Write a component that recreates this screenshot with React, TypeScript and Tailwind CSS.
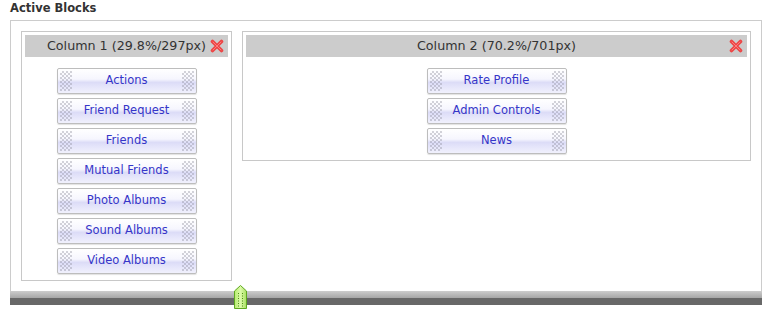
const col1 = ['Actions', 'Friend Request', 'Friends', 'Mutual Friends', 'Photo Albums', 'Sound Albums', 'Video Albums'];
const col2 = ['Rate Profile', 'Admin Controls', 'News'];

const RemoveIcon = () => (
  <svg width="14" height="14" viewBox="0 0 14 14" className="absolute right-[4px] top-[4px]">
    <path d="M2.5 2.5 L11.5 11.5 M11.5 2.5 L2.5 11.5" stroke="#ec4646" strokeWidth="3.6" strokeLinecap="round" />
    <path d="M3 3 L11 11 M11 3 L3 11" stroke="#ff7a7a" strokeWidth="1" strokeLinecap="round" />
  </svg>
);

const BlockButton = ({ label }: { label: string }) => (
  <div className="w-[140px] h-[26px] flex items-stretch p-[2px] rounded-[2px] border border-[#bdbdbd] shadow-[0_1px_1px_rgba(0,0,0,0.12)] bg-[image:linear-gradient(to_bottom,#ffffff_0%,#f6f6fe_42%,#dcdcf7_56%,#e4e4fa_72%,#f1f1fd_100%)]">
    <span className="w-[12px] bg-[image:repeating-conic-gradient(rgba(140,140,155,0.38)_0_25%,transparent_0_50%)] bg-[length:4px_4px]" />
    <span className="flex-1 flex items-center justify-center pb-[1px] text-[11.5px] text-[#3535c8]">{label}</span>
    <span className="w-[12px] bg-[image:repeating-conic-gradient(rgba(140,140,155,0.38)_0_25%,transparent_0_50%)] bg-[length:4px_4px]" />
  </div>
);

const Column = ({ title, items, className }: { title: string; items: string[]; className: string }) => (
  <div className={`border border-[#c8c8c8] p-[3px] pb-[6px] ${className}`}>
    <div className="relative h-[22px] bg-[#cccccc] flex items-center justify-center text-[12.7px] text-[#333333]">
      {title}
      <RemoveIcon />
    </div>
    <div className="mt-[11px] flex flex-col items-center gap-[4px]">
      {items.map((i) => (
        <BlockButton key={i} label={i} />
      ))}
    </div>
  </div>
);

export default function App() {
  return (
    <div className="w-[769px] h-[316px] bg-white pl-[10px] font-['DejaVu_Sans',Verdana,sans-serif]">
      <div className="h-[20px] leading-[16px] text-[11.5px] font-bold text-[#333333]">Active Blocks</div>
      <div className="relative w-[752px]">
        <div className="border border-b-0 border-[#cccccc] p-[10px] flex items-start gap-[10px]">
          <Column title="Column 1 (29.8%/297px)" items={col1} className="w-[211px] shrink-0" />
          <Column title="Column 2 (70.2%/701px)" items={col2} className="flex-1" />
        </div>
        <div className="h-[14px] flex flex-col">
          <div className="h-[7px] bg-[image:linear-gradient(to_bottom,#cdcdcd,#a6a6a6)]" />
          <div className="h-[7px] bg-[#686868]" />
        </div>
        <svg width="13" height="24" viewBox="0 0 13 24" className="absolute left-[224px] bottom-[-4px]">
          <defs>
            <linearGradient id="hg" x1="0" y1="0" x2="1" y2="0">
              <stop offset="0" stopColor="#b8ec70" />
              <stop offset="0.5" stopColor="#dcfaa8" />
              <stop offset="1" stopColor="#a8e060" />
            </linearGradient>
          </defs>
          <polygon points="0.5,6 6.5,0.5 12.5,6 12.5,23.5 0.5,23.5" fill="url(#hg)" stroke="#5fa820" />
          {[8, 10.5, 13, 15.5, 18, 20.5].map((y) => (
            <g key={y}>
              <rect x="4" y={y} width="1" height="1" fill="#4e8c14" />
              <rect x="8" y={y} width="1" height="1" fill="#4e8c14" />
            </g>
          ))}
        </svg>
      </div>
    </div>
  );
}
